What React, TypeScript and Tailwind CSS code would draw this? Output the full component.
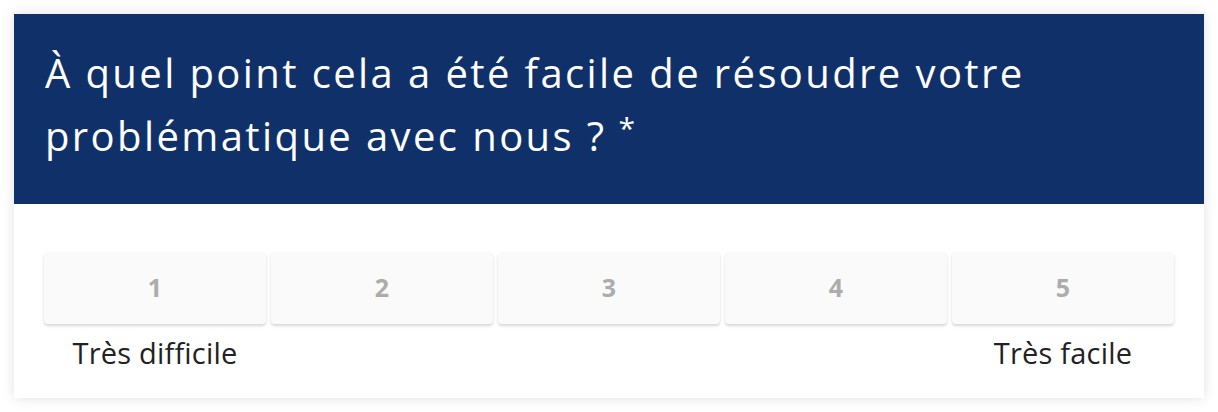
import React, { useState } from 'react';

const SCALE = [1, 2, 3, 4, 5];

export default function App() {
  const [value, setValue] = useState<number | null>(null);

  return (
    <div className="min-h-screen bg-white p-[14px] font-['Open_Sans','Lato',sans-serif]">
      <div className="bg-white shadow-[0_0_12px_rgba(0,0,0,0.12)]">
        <div className="bg-[#0f3069] h-[190px] px-[31px] pt-[27px]">
          <h1 className="text-white text-[40px] leading-[63px] tracking-[2.4px]">
            À quel point cela a été facile de résoudre votre
            <br />
            problématique avec nous ?<sup className="ml-[12px] text-[30px] relative top-[-12px]">*</sup>
          </h1>
        </div>
        <div className="px-[30px] pt-[48px] pb-[16px]">
          <div className="flex gap-[5px]">
            {SCALE.map((n) => (
              <div key={n} className="flex-1 flex flex-col items-center">
                <button
                  type="button"
                  onClick={() => setValue(n)}
                  className={`w-full h-[72px] rounded-[4px] bg-[#fafafa] shadow-[0_2px_3px_rgba(0,0,0,0.16)] text-[25px] font-bold ${
                    value === n ? 'text-[#0f3069]' : 'text-[#acacac]'
                  }`}
                >
                  {n}
                </button>
                <div className="h-[58px] flex items-center text-[29px] tracking-[0.2px] text-[#222]">
                  {n === 1 ? 'Très difficile' : n === 5 ? 'Très facile' : ''}
                </div>
              </div>
            ))}
          </div>
        </div>
      </div>
    </div>
  );
}
